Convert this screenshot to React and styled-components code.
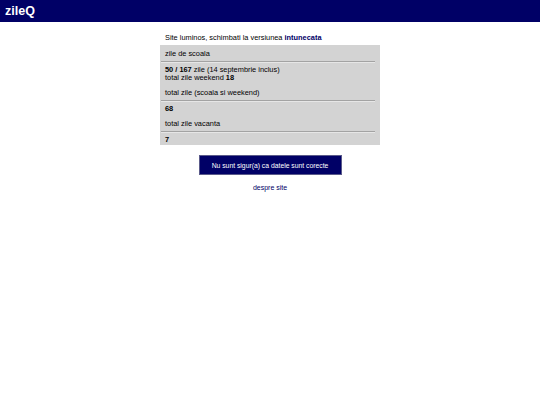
import React from 'react'
import styled, { createGlobalStyle } from 'styled-components'

const GlobalStyle = createGlobalStyle`
body {
  margin: 0;
  background: #ffffff;
  font-family: "Liberation Sans", Arial, sans-serif;
  color: #000000;
}
`

const Header = styled.header`
height: 22px;
background-color: #000066;
display: flex;
align-items: center;
padding-left: 5px;
`

const Logo = styled.span`
color: white;
font-weight: bold;
font-size: 12.5px;
`

const Main = styled.main`
width: 220px;
margin: 0 auto;
display: flex;
flex-direction: column;
`

const ThemeLine = styled.div`
font-size: 7.4px;
line-height: 8px;
padding: 12px 5px 3px;
`

const ThemeLink = styled.a`
color: #000066;
font-weight: bold;
text-decoration: none;
`

const Panel = styled.div`
background-color: #d3d3d3;
padding: 5px 5px 1px;
display: flex;
flex-direction: column;
gap: 7px;
`

const Section = styled.div`
display: flex;
flex-direction: column;
`

const Label = styled.div`
font-size: 7.4px;
line-height: 8px;
`

const Value = styled.div`
font-size: 7.4px;
line-height: 8px;
`

const Divider = styled.hr`
margin: 3px 0 3px -4px;
border: none;
border-top: 1px solid #a3a3a3;
border-bottom: 1px solid #e6e6e6;
height: 0;
`

const Button = styled.button`
align-self: center;
margin-top: 10px;
width: 143px;
height: 20px;
background-color: #000066;
color: white;
border: 1px solid #5a5a8a;
font-family: "Liberation Sans", Arial, sans-serif;
font-size: 6.8px;
cursor: pointer;
`

const About = styled.a`
align-self: center;
margin-top: 9px;
font-size: 7px;
line-height: 8px;
color: #000066;
text-decoration: none;
`

const App = () => {
  return (
    <>
      <GlobalStyle />
      <Header>
        <Logo>zileQ</Logo>
      </Header>
      <Main>
        <ThemeLine>
          Site luminos, schimbati la versiunea <ThemeLink href="#">intunecata</ThemeLink>
        </ThemeLine>
        <Panel>
          <Section>
            <Label>zile de scoala</Label>
            <Divider />
            <Value><b>50 / 167</b> zile (14 septembrie inclus)</Value>
            <Value>total zile weekend <b>18</b></Value>
          </Section>
          <Section>
            <Label>total zile (scoala si weekend)</Label>
            <Divider />
            <Value><b>68</b></Value>
          </Section>
          <Section>
            <Label>total zile vacanta</Label>
            <Divider />
            <Value><b>7</b></Value>
          </Section>
        </Panel>
        <Button>Nu sunt sigur(a) ca datele sunt corecte</Button>
        <About href="#">despre site</About>
      </Main>
    </>
  )
}

export default App
